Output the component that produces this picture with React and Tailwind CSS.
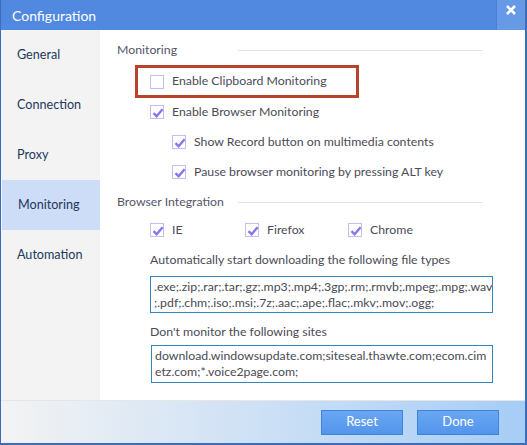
import React from "react";

const Check = ({ checked }) => (
  <span className="relative w-[14px] h-[14px] border border-[#c3bef0] bg-white shrink-0">
    {checked && (
      <svg viewBox="0 0 14 14" className="absolute left-[0px] top-[0px] w-[14px] h-[14px]">
        <path d="M2.5 7.2 L5.6 10.2 L11.6 3.2" fill="none" stroke="#8578ef" strokeWidth="2.4" />
      </svg>
    )}
  </span>
);

const Option = ({ checked, label, className = "" }) => (
  <div className={"flex items-center gap-[8px] " + className}>
    <Check checked={checked} />
    <span>{label}</span>
  </div>
);

const SectionHead = ({ title, className = "" }) => (
  <div className={"flex items-center h-[20px] " + className}>
    <span className="w-[121px] text-[#55556a]">{title}</span>
    <span className="w-[245px] h-px bg-[#dce3f1]" />
  </div>
);

const nav = ["General", "Connection", "Proxy", "Monitoring", "Automation"];

export default function App() {
  return (
    <div
      className="w-[527px] h-[445px] flex flex-col bg-white border-l border-r-[2px] border-b-[2px] border-[#3d6db6] text-[12.3px] text-[#4b4b57]"
      style={{ fontFamily: "Lato, 'Noto Sans', sans-serif" }}
    >
      <div className="h-[30px] flex bg-[#5189e1] text-white">
        <div className="flex-1 flex items-center pl-[11px] text-[14px]">Configuration</div>
        <div className="w-[29px] flex items-start justify-center pt-[4px] bg-[#6699e6] border-l border-[#4a7fd4]">
          <svg viewBox="0 0 12 12" className="w-[12px] h-[12px]">
            <path d="M2 2 L10 10 M10 2 L2 10" stroke="white" strokeWidth="2.6" />
          </svg>
        </div>
      </div>

      <div className="flex flex-1">
        <div className="w-[99px] bg-[#f3f3f3] flex flex-col text-[#23385e] text-[12.6px]">
          {nav.map((n) => (
            <div
              key={n}
              className={
                "h-[50px] flex items-center pl-[16px] " +
                (n === "Monitoring" ? "bg-[#cddcf7] ml-[1px] pl-[15px]" : "")
              }
            >
              {n}
            </div>
          ))}
        </div>

        <div className="flex-1 pl-[17px] pt-[10px] flex flex-col">
          <SectionHead title="Monitoring" />
          <div className="mt-[5px] ml-[18px] w-[224px] h-[33px] border-[3px] border-[#b8432d] flex items-center pl-[12px]">
            <Option checked={false} label="Enable Clipboard Monitoring" />
          </div>
          <Option checked label="Enable Browser Monitoring" className="h-[30px] ml-[33px] -mt-[1px]" />
          <Option checked label="Show Record button on multimedia contents" className="h-[30px] ml-[55px]" />
          <Option checked label="Pause browser monitoring by pressing ALT key" className="h-[30px] ml-[55px]" />

          <SectionHead title="Browser Integration" className="mt-[5px]" />
          <div className="mt-[3px] h-[30px] ml-[33px] flex items-center">
            <Option checked label="IE" className="w-[95px]" />
            <Option checked label="Firefox" className="w-[103px]" />
            <Option checked label="Chrome" />
          </div>

          <div className="mt-[5px] h-[20px] ml-[33px] flex items-center">
            Automatically start downloading the following file types
          </div>
          <div className="mt-[6px] ml-[33px] w-[343px] h-[37px] border border-[#2f86c1] px-[3px] pt-[2px] leading-[16px] text-[#4a4a55]">
            <div>.exe;.zip;.rar;.tar;.gz;.mp3;.mp4;.3gp;.rm;.rmvb;.mpeg;.mpg;.wav</div>
            <div>;.pdf;.chm;.iso;.msi;.7z;.aac;.ape;.flac;.mkv;.mov;.ogg;</div>
          </div>

          <div className="mt-[9px] h-[20px] ml-[33px] flex items-center">Don't monitor the following sites</div>
          <div className="mt-[3px] ml-[34px] w-[342px] h-[38px] border border-[#2f86c1] px-[3px] pt-[2px] leading-[16px] text-[#4a4a55]">
            <div>download.windowsupdate.com;siteseal.thawte.com;ecom.cim</div>
            <div>etz.com;*.voice2page.com;</div>
          </div>
        </div>
      </div>

      <div className="h-[43px] flex items-center justify-end gap-[14px] pr-[26px] border-t border-[#e6e6e6] bg-gradient-to-r from-[#f3f3f3] to-[#a6cdf6]">
        <button className="w-[82px] h-[25px] bg-gradient-to-b from-[#6aa6f2] to-[#5395ec] border border-[#3f83dc] text-white text-[13px]">
          Reset
        </button>
        <button className="w-[82px] h-[25px] bg-gradient-to-b from-[#6aa6f2] to-[#5395ec] border border-[#3f83dc] text-white text-[13px]">
          Done
        </button>
      </div>
    </div>
  );
}
